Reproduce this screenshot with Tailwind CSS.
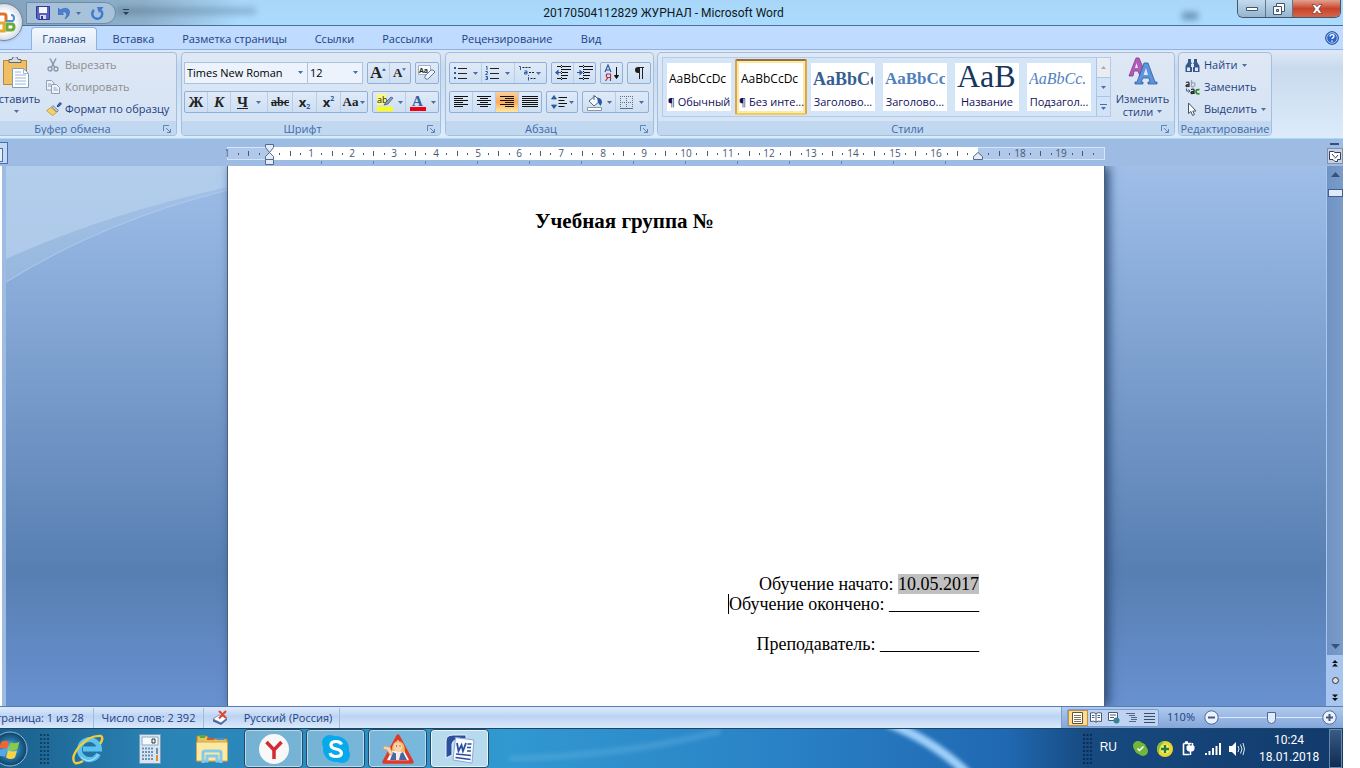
<!DOCTYPE html>
<html lang="ru">
<head>
<meta charset="utf-8">
<title>20170504112829 ЖУРНАЛ - Microsoft Word</title>
<script src="https://cdn.jsdelivr.net/npm/@tailwindcss/browser@4"></script>
</head>
<body class="h-screen overflow-hidden bg-white pr-[17px] text-[11px] text-[#1e3f7f]" style="font-family:'Open Sans','Noto Sans',sans-serif">
<svg class="hidden" aria-hidden="true">
  <symbol id="dd" viewBox="0 0 5 3"><path d="M0 0h5L2.500 3z" fill="#4a6ea5"/></symbol>
  <symbol id="launch" viewBox="0 0 8 8"><path d="M.5 6V.5H6" fill="none" stroke="#5f84b8"/><path d="M3 3l4 4M7.500 4v3.500H4" fill="none" stroke="#5f84b8"/></symbol>
</svg>
<div class="relative flex h-full flex-col overflow-hidden">

  <!-- Office button -->
  <button aria-label="Office" class="absolute -left-[15px] top-[3px] z-10 size-[38px] rounded-full border border-[#73879f] bg-radial from-white from-40% to-[#aebdd0] shadow">
    <svg class="ml-[7px] size-6" viewBox="0 0 24 24" fill="none" stroke-width="3"><path d="M13 12V6q0-2-2-2H6" stroke="#e0702a"/><path d="M13 11h6q2 0 2-3t-3-3" stroke="#4a8fd8" stroke-width="2"/><path d="M11 13H4v6q0 2 3 2h4z" stroke="#e8a72c"/><path d="M14 14h5q2 0 2 3t-3 3h-4z" stroke="#68ab3c"/></svg>
  </button>

  <!-- Title bar -->
  <header class="relative flex h-[26px] shrink-0 items-start border-b border-[#4e6f92] bg-linear-to-b from-[#a9d6f8] to-[#aadcff]">
    <div class="absolute inset-y-0 left-0 w-[240px] bg-linear-to-r from-[#86a3bc] via-[#8eb0cb] via-60% to-transparent"></div>
    <div class="absolute left-[116px] top-[7px] h-2 w-[140px] bg-linear-to-r from-[#5c7890] to-[#7ba3c4] opacity-60 blur-[3px]"></div>
    <div class="absolute left-[1182px] top-3 h-2 w-4 bg-[#44698b] opacity-60 blur-[3px]"></div>
    <div class="relative ml-[26px] mt-[2px] flex h-[22px] w-[90px] items-center gap-[6px] rounded-r-full border border-[#6c8cab] bg-[#b4cce2]/70 pl-[9px]">
      <button aria-label="Сохранить"><svg class="size-[14px]" viewBox="0 0 14 14"><path d="M.5.500h13v13H2l-1.500-1.500z" fill="#5b5fc0" stroke="#34379a"/><path d="M3 1h8v6H3z" fill="#f4f7ff"/><path d="M4 9h6v4H4z" fill="#d5d9ee"/><path d="M5 10h2v3H5z" fill="#34379a"/></svg></button>
      <button aria-label="Отменить" class="ml-[2px] flex items-center gap-[6px]"><svg class="h-[14px] w-3" viewBox="0 0 12 14"><path d="M0 2l2.200 1.800Q10 0 11.500 5.500q.5 4.500-4.500 7.500 3-4 1-6.500-1.500-1.500-4 0L5.500 8.500H0z" fill="#4a80d2" stroke="#2f5fae" stroke-width=".6"/></svg><svg class="h-[3px] w-[5px]"><use href="#dd"/></svg></button>
      <button aria-label="Повторить" class="ml-1"><svg class="size-[13px]" viewBox="0 0 13 13" fill="none"><path d="M3 3A5 5 0 1 0 10 3.500" stroke="#3c7bd0" stroke-width="2.400"/><path d="M6 0h6.500L8 6z" fill="#3c7bd0"/></svg></button>
    </div>
    <button aria-label="Настройка панели" class="relative ml-[7px] mt-[9px]"><svg class="h-[7px] w-[6px]" viewBox="0 0 6 7"><path d="M0 .5h6" stroke="#24405f"/><path d="M0 3h6L3 6z" fill="#24405f"/></svg></button>
    <h1 class="absolute inset-x-0 top-[5px] pr-4 text-center text-[12px] leading-[17px] text-[#101820]" style="font-family:Roboto,'Open Sans',sans-serif">20170504112829 ЖУРНАЛ - Microsoft Word</h1>
    <div class="relative ml-auto mr-[2px] flex h-[18px] overflow-hidden rounded-b-md border border-t-0 border-[#42566c]">
      <button aria-label="Свернуть" class="flex w-[28px] items-center justify-center border-r border-[#5f7690] bg-linear-to-b from-[#c3dbee] to-[#94b4cf]"><svg class="h-1 w-3" viewBox="0 0 12 4"><path d="M.5.500h11v3H.5z" fill="#fff" stroke="#45566b"/></svg></button>
      <button aria-label="Развернуть" class="flex w-[27px] items-center justify-center border-r border-[#5f7690] bg-linear-to-b from-[#c3dbee] to-[#94b4cf]"><svg class="size-3" viewBox="0 0 12 12" fill="#fff" stroke="#45566b"><path d="M3.500.500h8v8h-8z"/><path d="M.5 3.500h8v8h-8z"/><path d="M3.500 6.500h2v2h-2z" fill="#9ab5cc"/></svg></button>
      <button aria-label="Закрыть" class="flex w-[47px] items-center justify-center bg-linear-to-b from-[#e0a090] from-0% via-[#c8432a] via-50% to-[#d4664a]"><svg class="h-[10px] w-3" viewBox="0 0 12 10"><path d="M1 .5h3l2 2.200 2-2.200h3L7.800 5 11 9.500H8L6 7.200 4 9.500H1L4.200 5z" fill="#fff" stroke="#6e3a34" stroke-width=".7"/></svg></button>
    </div>
  </header>

  <!-- Ribbon tabs -->
  <nav class="flex h-6 shrink-0 items-end border-b border-[#8db2e3] bg-[#bfdbff] pl-[31px] text-[11px]">
    <a href="#" class="-mb-px flex h-[23px] w-[66px] items-center justify-center rounded-t border border-b-0 border-[#8db2e3] bg-linear-to-b from-[#f3f8fe] to-[#dbe7f6]">Главная</a>
    <a href="#" class="flex h-5 w-[73px] items-center justify-center">Вставка</a>
    <a href="#" class="flex h-5 w-[129px] items-center justify-center">Разметка страницы</a>
    <a href="#" class="flex h-5 w-[71px] items-center justify-center">Ссылки</a>
    <a href="#" class="flex h-5 w-[75px] items-center justify-center">Рассылки</a>
    <a href="#" class="flex h-5 w-[124px] items-center justify-center">Рецензирование</a>
    <a href="#" class="flex h-5 w-[44px] items-center justify-center">Вид</a>
    <button aria-label="Справка" class="mb-1 ml-auto mr-1"><svg class="size-[14px]" viewBox="0 0 14 14"><circle cx="7" cy="7" r="6.300" fill="#2c66c9" stroke="#1c458f"/><circle cx="7" cy="7" r="5.300" fill="none" stroke="#cfe2fa" stroke-width=".8"/><path d="M5 5.600q0-2 2-2t2 1.700q0 1-1.200 1.600-.8.400-.8 1.200M7 9.500v1.300" fill="none" stroke="#fff" stroke-width="1.400"/></svg></button>
  </nav>

  <main class="contents">
  <!-- Ribbon -->
  <section aria-label="Лента" class="flex h-[89px] shrink-0 gap-1 border-b border-[#a5dcf5] bg-linear-to-b from-[#dfe9f5] from-0% via-[#c9daee] via-20% to-[#dcecfb] pb-[2px] pt-[2px]">

    <div class="flex w-[177px] flex-col overflow-hidden rounded-r border border-l-0 border-[#a3bfe0] bg-linear-to-b from-[#dfe8f4] to-[#d3e2f4]">
      <div class="flex h-[68px] shrink-0">
        <button class="-ml-[10px] mt-1 flex w-[52px] shrink-0 flex-col items-center">
          <svg class="h-8 w-7" viewBox="0 0 28 32"><path d="M1.500 3.500h23v24h-23z" fill="#efbf62" stroke="#b98532"/><path d="M7 5.500v-3h3a3 3 0 0 1 6 0h3v3z" fill="#d6dbe2" stroke="#5f6873"/><path d="M10.500 11.500h11l5 5v14h-16z" fill="#fff" stroke="#7f9cc4"/><path d="M21.500 11.500v5h5M13 15h6M13 18h11M13 21h11M13 24h11M13 27h11" fill="none" stroke="#9db6d6"/></svg>
          <span class="mt-[3px] leading-[14px]">Вставить</span>
          <svg class="mt-1 h-[3px] w-[5px]"><use href="#dd"/></svg>
        </button>
        <div class="ml-1 mt-[1px] flex flex-col text-[11px]">
          <button class="flex h-[22px] items-center gap-[5px] text-[#8d8d8d]"><svg class="size-[14px]" viewBox="0 0 14 14" fill="none" stroke="#8597ad"><path d="M4 .5l4.500 8.500M10 .5L5.500 9" stroke-width="1.500"/><circle cx="4" cy="11" r="2" stroke-width="1.300"/><circle cx="10" cy="11" r="2" stroke-width="1.300"/></svg>Вырезать</button>
          <button class="flex h-[22px] items-center gap-[5px] text-[#8d8d8d]"><svg class="size-[14px]" viewBox="0 0 14 14" fill="#eef2f7" stroke="#8ea0b8"><path d="M.5.500h5l2.500 2.500v7H.5z"/><path d="M5.500 4.500h5l3 3v6h-8zM2 4h3M2 6h3M7.500 8h3M7.500 10h4.500"/></svg>Копировать</button>
          <button class="flex h-[22px] items-center gap-[3px]"><svg class="h-[14px] w-4" viewBox="0 0 16 14"><path d="M11 4l3-3.500 1.500 1.500L12 5z" fill="#3d69b5" stroke="#28488a"/><path d="M7 3.500l5.500 5-1.500 1.500L5.500 5z" fill="#c6cbd3" stroke="#626a75" stroke-width=".7"/><path d="M5 5.500l5.500 5-4 3-6-5z" fill="#f3d36c" stroke="#b48a26" stroke-width=".7"/></svg>Формат по образцу</button>
        </div>
      </div>
      <div class="flex flex-1 items-center bg-[#c1d8f0] text-[#3e6aaa]"><span class="flex-1 pr-[18px] text-center">Буфер обмена</span><button aria-label="Буфер обмена: параметры" class="mr-[5px]"><svg class="size-2"><use href="#launch"/></svg></button></div>
    </div>

    <div class="flex w-[260px] flex-col overflow-hidden rounded border border-[#a3bfe0] bg-linear-to-b from-[#dfe8f4] to-[#d3e2f4]">
      <div class="flex h-[68px] shrink-0 flex-col gap-[7px] pl-[2px] pt-[9px]">
        <div class="flex h-[22px] gap-1">
          <div class="flex text-black">
            <label class="relative flex"><select aria-label="Шрифт" class="w-[124px] appearance-none border border-[#abc1de] bg-[#ecf3fc] pl-[2px] text-[11px]"><option>Times New Roman</option></select><svg class="absolute right-[5px] top-[9px] h-[3px] w-[5px]"><use href="#dd"/></svg></label>
            <label class="relative -ml-px flex"><select aria-label="Размер шрифта" class="w-[56px] appearance-none border border-[#abc1de] bg-[#ecf3fc] pl-[2px] text-[11px]"><option>12</option></select><svg class="absolute right-[5px] top-[9px] h-[3px] w-[5px]"><use href="#dd"/></svg></label>
          </div>
          <div class="flex w-[44px] divide-x divide-[#b7cde8] rounded-xs border border-[#8fb0da] bg-linear-to-b from-[#e0eaf7] to-[#cddff3] font-bold text-[#222]" style="font-family:'Liberation Serif',serif">
            <button class="flex flex-1 items-center justify-center text-[17px] leading-5" aria-label="Увеличить размер">A<svg class="mb-2 h-[3px] w-1" viewBox="0 0 5 3"><path d="M0 3h5L2.500 0z" fill="#2c5aa0"/></svg></button>
            <button class="flex flex-1 items-center justify-center text-[13px] leading-5" aria-label="Уменьшить размер">A<svg class="mb-2 h-[3px] w-1"><use href="#dd"/></svg></button>
          </div>
          <button aria-label="Очистить формат" class="flex w-6 items-center justify-center rounded-xs border border-[#8fb0da] bg-linear-to-b from-[#e0eaf7] to-[#cddff3]"><svg class="h-4 w-[18px]" viewBox="0 0 18 16"><path d="M.5.500h12v9H.5z" fill="#fff" stroke="#9fb0c8"/><text x="1" y="8" font-size="7" font-weight="bold" fill="#222">Aa</text><path d="M7 11l6-6q2-1 4 2l-6 6q-1 2-3 1t-1-3z" fill="#eef3fb" stroke="#60779b"/></svg></button>
        </div>
        <div class="flex h-[22px] gap-1 text-[#222]">
          <div class="flex w-[184px] divide-x divide-[#b7cde8] rounded-xs border border-[#8fb0da] bg-linear-to-b from-[#e0eaf7] to-[#cddff3] font-bold" style="font-family:'Liberation Serif',serif">
            <button class="w-[23px] text-[15px] leading-5">Ж</button>
            <button class="w-[23px] text-[15px] italic leading-5">К</button>
            <button class="flex w-[37px] items-center justify-center gap-2 text-[15px] leading-5"><span class="underline">Ч</span><svg class="h-[3px] w-[5px]"><use href="#dd"/></svg></button>
            <button class="w-[25px] text-[12px] leading-5 line-through">abc</button>
            <button class="flex w-6 items-center justify-center text-[13px] leading-5" style="font-family:'Open Sans',sans-serif">x<span class="pt-2 text-[7px] leading-[9px] text-[#2c5aa0]">2</span></button>
            <button class="flex w-6 items-center justify-center text-[13px] leading-5" style="font-family:'Open Sans',sans-serif">x<span class="pb-2 text-[7px] leading-[9px] text-[#2c5aa0]">2</span></button>
            <button class="flex flex-1 items-center justify-center gap-[2px] text-[13px] leading-5">Aa<svg class="h-[3px] w-[5px]"><use href="#dd"/></svg></button>
          </div>
          <div class="flex w-[67px] divide-x divide-[#b7cde8] rounded-xs border border-[#8fb0da] bg-linear-to-b from-[#e0eaf7] to-[#cddff3]">
            <button aria-label="Цвет выделения" class="flex flex-1 items-center justify-center gap-1"><svg class="size-[18px]" viewBox="0 0 18 18"><path d="M1 1h9v11H1z" fill="#fbf87a"/><path d="M1 14h16v4H1z" fill="#ffff00"/><text x="1" y="10" font-size="9" fill="#222">ab</text><path d="M15 4l2 1-5 6-4 1 2-3z" fill="#8a9fbd" stroke="#475a77" stroke-width=".8"/></svg><svg class="h-[3px] w-[5px]"><use href="#dd"/></svg></button>
            <button aria-label="Цвет текста" class="flex flex-1 items-center justify-center gap-1"><svg class="size-[18px]" viewBox="0 0 18 18"><text x="3" y="13" font-size="15" font-weight="bold" font-family="Liberation Serif" fill="#34609e">A</text><path d="M1 14h16v4H1z" fill="#f00010"/></svg><svg class="h-[3px] w-[5px]"><use href="#dd"/></svg></button>
          </div>
        </div>
      </div>
      <div class="flex flex-1 items-center bg-[#c1d8f0] text-[#3e6aaa]"><span class="flex-1 pr-1 text-center">Шрифт</span><button aria-label="Шрифт: параметры" class="mr-[5px]"><svg class="size-2"><use href="#launch"/></svg></button></div>
    </div>

    <div class="flex w-[209px] flex-col overflow-hidden rounded border border-[#a3bfe0] bg-linear-to-b from-[#dfe8f4] to-[#d3e2f4]">
      <div class="flex h-[68px] shrink-0 flex-col gap-[7px] pl-[3px] pt-[9px]">
        <div class="flex h-[22px] gap-1">
          <div class="flex w-[98px] divide-x divide-[#b7cde8] rounded-xs border border-[#8fb0da] bg-linear-to-b from-[#e0eaf7] to-[#cddff3]">
            <button aria-label="Маркеры" class="flex flex-1 items-center justify-center gap-[6px]"><svg class="size-[14px]" viewBox="0 0 14 14"><path d="M1 1h2v2H1zM1 6h2v2H1zM1 11h2v2H1z" fill="#2c5aa0"/><path d="M5 2.500h9M5 7.500h9M5 12.500h9" stroke="#222"/></svg><svg class="h-[3px] w-[5px]"><use href="#dd"/></svg></button>
            <button aria-label="Нумерация" class="flex flex-1 items-center justify-center gap-[6px]"><svg class="size-[14px]" viewBox="0 0 14 14"><path d="M1 .5h1V4M.5 5.500h2V7L.5 8.500h2M.5 10.500h2v3h-2M1 12h1" stroke="#2c5aa0" fill="none"/><path d="M5 2.500h9M5 7.500h9M5 12.500h9" stroke="#222"/></svg><svg class="h-[3px] w-[5px]"><use href="#dd"/></svg></button>
            <button aria-label="Многоуровневый список" class="flex flex-1 items-center justify-center"><svg class="h-4 w-[17px]" viewBox="0 0 17 16"><path d="M0 1.500h1.500V5M5.500 6h2.500v3H5.500V7.500H8M9.500 12v3.500M9.500 10v1" stroke="#2c5aa0" fill="none"/><path d="M3.500 2.500h8M10 7.500h6M11.500 13.500h5" stroke="#222" stroke-dasharray="2 1"/></svg><svg class="h-[3px] w-[5px]"><use href="#dd"/></svg></button>
          </div>
          <div class="flex w-[45px] divide-x divide-[#b7cde8] rounded-xs border border-[#8fb0da] bg-linear-to-b from-[#e0eaf7] to-[#cddff3]">
            <button aria-label="Уменьшить отступ" class="flex flex-1 items-center justify-center"><svg class="size-4" viewBox="0 0 16 16"><path d="M2 1.500h4M7 1.500h9M2 13.500h4M7 10.500h6M7 4.500h9M7 7.500h6M7 13.500h5" stroke="#111"/><path d="M0 7.500l3.500-3V7H6v1H3.500v2.500z" fill="#2c5aa0"/><path d="M6.500 0v16" stroke="#111" stroke-dasharray="1 1"/></svg></button>
            <button aria-label="Увеличить отступ" class="flex flex-1 items-center justify-center"><svg class="size-4" viewBox="0 0 16 16"><path d="M2 1.500h4M7 1.500h9M2 13.500h4M7 10.500h6M7 4.500h9M7 7.500h6M7 13.500h5" stroke="#111"/><path d="M6 7.500l-3.500-3V7H0v1h2.500v2.500z" fill="#2c5aa0"/><path d="M6.500 0v16" stroke="#111" stroke-dasharray="1 1"/></svg></button>
          </div>
          <button aria-label="Сортировка" class="flex w-[23px] items-center justify-center rounded-xs border border-[#8fb0da] bg-linear-to-b from-[#e0eaf7] to-[#cddff3]"><svg class="h-[18px] w-4" viewBox="0 0 16 18"><path d="M1 8l3-7 3 7M2 6h4" stroke="#2c5aa0" fill="none" stroke-width="1.200"/><path d="M6.500 17v-7H3q-1.500 1.500 0 3.500h3.500M4 13.500L1.500 17" stroke="#b03344" fill="none" stroke-width="1.200"/><path d="M12.500 3v10M10.500 11.500l2 3 2-3z" stroke="#111" fill="#111"/></svg></button>
          <button aria-label="Знаки абзаца" class="flex w-6 items-center justify-center rounded-xs border border-[#8fb0da] bg-linear-to-b from-[#e0eaf7] to-[#cddff3]"><svg class="h-3 w-[10px]" viewBox="0 0 10 12"><path d="M10 .5H4M5.500 1v11M8.500 1v11" fill="none" stroke="#222"/><path d="M6 0H4a3 3 0 0 0 0 6h2z" fill="#222"/></svg></button>
        </div>
        <div class="flex h-[22px] gap-1">
          <div class="flex w-[93px] divide-x divide-[#b7cde8] rounded-xs border border-[#8fb0da] bg-linear-to-b from-[#e0eaf7] to-[#cddff3]">
            <button aria-label="По левому краю" class="flex flex-1 items-center justify-center"><svg class="h-3 w-[14px]" viewBox="0 0 14 12"><path d="M0 .5h14M0 2.500h9M0 4.500h14M0 6.500h9M0 8.500h14M0 10.500h9" stroke="#111"/></svg></button>
            <button aria-label="По центру" class="flex flex-1 items-center justify-center"><svg class="h-3 w-[14px]" viewBox="0 0 14 12"><path d="M0 .5h14M3 2.500h8M0 4.500h14M3 6.500h8M0 8.500h14M3 10.500h8" stroke="#111"/></svg></button>
            <button aria-label="По правому краю" aria-pressed="true" class="flex flex-1 items-center justify-center bg-linear-to-b from-[#f8cfa0] via-[#fbab55] to-[#fde7a0]"><svg class="h-3 w-[14px]" viewBox="0 0 14 12"><path d="M0 .5h14M5 2.500h9M0 4.500h14M5 6.500h9M0 8.500h14M5 10.500h9" stroke="#111"/></svg></button>
            <button aria-label="По ширине" class="flex flex-1 items-center justify-center"><svg class="h-3 w-4" viewBox="0 0 16 12"><path d="M0 .5h16M0 2.500h16M0 4.500h16M0 6.500h16M0 8.500h16M0 10.500h16" stroke="#111"/></svg></button>
          </div>
          <button aria-label="Интервал" class="flex w-8 items-center justify-center gap-[2px] rounded-xs border border-[#8fb0da] bg-linear-to-b from-[#e0eaf7] to-[#cddff3]"><svg class="size-4" viewBox="0 0 16 16"><path d="M3 2v3M3 11v3" stroke="#2c5aa0"/><path d="M.5 5L3 1.500 5.500 5zM.5 11L3 14.500 5.500 11z" fill="#2c5aa0" stroke="#2c5aa0" stroke-width=".8"/><path d="M7.500 3.500H16M7.500 6.500h6M7.500 9.500H16M7.500 12.500h6" stroke="#111"/></svg><svg class="h-[3px] w-[5px]"><use href="#dd"/></svg></button>
          <div class="flex w-[67px] divide-x divide-[#b7cde8] rounded-xs border border-[#8fb0da] bg-linear-to-b from-[#e0eaf7] to-[#cddff3]">
            <button aria-label="Заливка" class="flex flex-1 items-center justify-center gap-1"><svg class="size-[17px]" viewBox="0 0 17 17"><path d="M3 7l6-5 5 5-6 5z" fill="#f7fafe" stroke="#50688c"/><path d="M8 6V1" stroke="#50688c"/><path d="M11 3.500q5 .5 5 5L14.500 12 12 8.500z" fill="#2c5aa0"/><path d="M1.500 13.500h14v3h-14z" fill="#fff" stroke="#8a96a8"/></svg><svg class="h-[3px] w-[5px]"><use href="#dd"/></svg></button>
            <button aria-label="Границы" class="flex flex-1 items-center justify-center gap-[6px]"><svg class="size-[13px]" viewBox="0 0 13 13"><path d="M.5 0v13M6.500 0v13M12.500 0v13M0 .5h13M0 6.500h13" stroke="#5d6e88" stroke-dasharray="1 1"/><path d="M0 12.500h13" stroke="#5d6e88"/></svg><svg class="h-[3px] w-[5px]"><use href="#dd"/></svg></button>
          </div>
        </div>
      </div>
      <div class="flex flex-1 items-center bg-[#c1d8f0] text-[#3e6aaa]"><span class="flex-1 pr-1 text-center">Абзац</span><button aria-label="Абзац: параметры" class="mr-[5px]"><svg class="size-2"><use href="#launch"/></svg></button></div>
    </div>

    <div class="-ml-px flex w-[518px] flex-col overflow-hidden rounded border border-[#a3bfe0] bg-linear-to-b from-[#dfe8f4] to-[#d3e2f4]">
      <div class="flex h-[68px] shrink-0 pl-1 pt-1">
        <div class="flex h-[60px] w-[449px] border border-[#b3cbe8] bg-[#d5e5f8] pt-px text-[#10105c]">
          <button class="flex h-14 w-[72px] flex-col justify-center px-1"><span class="flex h-12 w-16 flex-col bg-white"><span class="mx-[2px] flex h-8 items-center overflow-hidden text-[12px] whitespace-nowrap text-black">AaBbCcDc</span><span class="text-center leading-[14px] whitespace-nowrap">¶ Обычный</span></span></button>
          <button aria-pressed="true" class="flex h-14 w-[72px] flex-col justify-center rounded-xs border-2 border-t-[#94713c] border-r-[#d9a64b] border-b-[#eccf5b] border-l-[#d9a64b] bg-[#fbe9a4] px-[2px]"><span class="flex h-12 w-16 flex-col bg-white"><span class="mx-[2px] flex h-8 items-center overflow-hidden text-[12px] whitespace-nowrap text-black">AaBbCcDc</span><span class="text-center leading-[14px] whitespace-nowrap">¶ Без инте...</span></span></button>
          <button class="flex h-14 w-[72px] flex-col justify-center px-1"><span class="flex h-12 w-16 flex-col bg-white"><span class="mx-[2px] flex h-8 items-center overflow-hidden text-[18px] font-bold whitespace-nowrap text-[#365f91]" style="font-family:'Liberation Serif',serif">AaBbCc</span><span class="text-center leading-[14px] whitespace-nowrap">Заголово...</span></span></button>
          <button class="flex h-14 w-[72px] flex-col justify-center px-1"><span class="flex h-12 w-16 flex-col bg-white"><span class="mx-[2px] flex h-8 items-center overflow-hidden text-[17px] font-bold whitespace-nowrap text-[#4f81bd]" style="font-family:'Liberation Serif',serif">AaBbCc</span><span class="text-center leading-[14px] whitespace-nowrap">Заголово...</span></span></button>
          <button class="flex h-14 w-[72px] flex-col justify-center px-1"><span class="flex h-12 w-16 flex-col bg-white"><span class="mx-[2px] flex h-8 items-start overflow-hidden text-[32px] leading-[26px] whitespace-nowrap text-[#17365d]" style="font-family:'Liberation Serif',serif">AaB</span><span class="text-center leading-[14px] whitespace-nowrap">Название</span></span></button>
          <button class="flex h-14 w-[72px] flex-col justify-center px-1"><span class="flex h-12 w-16 flex-col bg-white"><span class="mx-[2px] flex h-8 items-center overflow-hidden text-[16px] whitespace-nowrap text-[#4f81bd] italic" style="font-family:'Liberation Serif',serif">AaBbCc.</span><span class="text-center leading-[14px] whitespace-nowrap">Подзагол...</span></span></button>
          <div class="-mt-px ml-auto flex w-[14px] flex-col divide-y divide-[#a9c4e5] border-l border-[#a9c4e5]">
            <button aria-label="Вверх" class="flex flex-1 items-center justify-center bg-[#e9ecf1]"><svg class="h-[3px] w-[5px]" viewBox="0 0 5 3"><path d="M0 3h5L2.500 0z" fill="#a4a9b2"/></svg></button>
            <button aria-label="Вниз" class="flex flex-1 items-center justify-center bg-[#d3e3f7]"><svg class="h-[3px] w-[5px]"><use href="#dd"/></svg></button>
            <button aria-label="Все стили" class="flex flex-1 flex-col items-center justify-center gap-[2px] bg-[#d3e3f7]"><span class="h-px w-[7px] bg-[#4a6ea5]"></span><svg class="h-[3px] w-[5px]"><use href="#dd"/></svg></button>
          </div>
        </div>
        <button class="flex flex-1 flex-col items-center"><svg class="h-7 w-[30px]" viewBox="0 0 30 28"><path d="M1 19L8 1h3l5 12-2 6h-2l-2-5H6l-1 5z" fill="#b35bb8" stroke="#7d3888" stroke-width=".8"/><path d="M7 11h3L8.500 6z" fill="#dfe8f4"/><path d="M7 27v-2h2l7-19h4l7 19h2v2h-9v-2h2l-1-4h-6l-2 4h2v2z" fill="#5b93dc" stroke="#2d5da3" stroke-width=".8"/><path d="M15.500 18h4.500l-2-7z" fill="#dfe8f4"/></svg><span class="mt-[7px] leading-[13px]">Изменить</span><span class="flex items-center gap-1 leading-[13px]">стили<svg class="h-[3px] w-[5px]"><use href="#dd"/></svg></span></button>
      </div>
      <div class="flex flex-1 items-center bg-[#c1d8f0] text-[#3e6aaa]"><span class="flex-1 pr-1 text-center">Стили</span><button aria-label="Стили: параметры" class="mr-[5px]"><svg class="size-2"><use href="#launch"/></svg></button></div>
    </div>

    <div class="-ml-px flex w-[94px] flex-col overflow-hidden rounded border border-[#a3bfe0] bg-linear-to-b from-[#dfe8f4] to-[#d3e2f4]">
      <div class="flex h-[68px] shrink-0 flex-col pl-[6px] pt-[1px]">
        <button class="flex h-[22px] items-center gap-1"><svg class="size-[15px]" viewBox="0 0 15 15"><path d="M3 1h3v3l1 2v8H.5V8L3 4zM9 1h3v3l2.500 4v6H8V6l1-2z" fill="#37588f"/><path d="M6 6h3v3H6zM2 9.500h3V13H2zM10 9.500h3V13h-3z" fill="#dce8f8"/></svg>Найти<svg class="ml-px h-[3px] w-[5px]"><use href="#dd"/></svg></button>
        <button class="flex h-[22px] items-center gap-1"><svg class="size-[15px]" viewBox="0 0 15 15"><g fill="none" stroke-width="1.300"><path d="M1 2.500q3-1 3 .5V7M4 4.500q-3 0-3 1.300T4 6" stroke="#333"/><path d="M6.500 0v7M6.500 3q3.500-1 3.500 1.500T6.500 7" stroke="#9aa6b8"/><path d="M6 9.500q3-1 3 .5v4M9 11.500q-3 0-3 1.300t3 .2" stroke="#222"/><path d="M14.500 9.700q-3.500-.7-3.500 2t3.500 2" stroke="#2b8b35" stroke-width="1.800"/><path d="M1.500 8.500V11H5M3.500 9.500L5 11l-1.500 1.500" stroke="#3f608f" stroke-width="1"/></g></svg>Заменить</button>
        <button class="flex h-[22px] items-center gap-1"><svg class="h-[14px] w-[15px]" viewBox="0 0 15 14"><path d="M3.500 1v10.500l2.500-2 1.500 4 2-1-1.700-3.500h3.200z" fill="#fff" stroke="#44546d"/></svg>Выделить<svg class="h-[3px] w-[5px]"><use href="#dd"/></svg></button>
      </div>
      <div class="flex flex-1 items-center justify-center bg-[#c1d8f0] text-[#3e6aaa]">Редактирование</div>
    </div>
  </section>

  <!-- Ruler -->
  <div class="flex h-[27px] shrink-0 bg-[#9dbbe3]">
    <div class="flex w-[6px] shrink-0 items-start pt-[3px]"><button aria-label="Табуляция" class="h-[22px] w-2 shrink-0 border border-l-0 border-[#4a71ad] bg-[#c3d9f6] pt-[3px]"><span class="block h-[14px] w-[3px] border border-l-0 border-[#4a71ad] bg-[#e6f0fc]"></span></button></div>
    <div class="flex flex-1 justify-center"><svg id="ruler" class="h-[27px] w-[880px]" viewBox="0 0 880 27" role="img" aria-label="Линейка"></svg></div>
    <div class="flex w-[17px] shrink-0 flex-col items-center pt-1"><span class="mb-[3px] h-[2px] w-[9px] bg-[#33507f]"></span><button aria-label="Показать линейку" class="flex size-4 items-center justify-center border border-[#8290a8] bg-[#c5d2e6]"><svg class="size-3" viewBox="0 0 12 12" fill="#fff" stroke="#33415c"><path d="M.5 1.500h4l1.500 1h5.500v7H8.500v2H6L4 9.500H.5z"/><path d="M3 4l3 3.500M9 5L6 8.500" fill="none"/></svg></button></div>
  </div>

  <!-- Document area -->
  <section aria-label="Документ" class="flex min-h-0 flex-1">
    <div class="w-[6px] shrink-0 border-l-2 border-white bg-[#9dbbe3]"></div>
    <div class="relative flex min-w-0 flex-1 justify-center overflow-hidden bg-linear-to-b from-[#9fbfe9] from-0% via-[#587fb2] via-75% to-[#6891d0]">
      <svg class="absolute left-0 top-0 h-[120px] w-[222px]" viewBox="0 0 222 120"><path d="M0 0h222v24Q100 54 0 116z" fill="#b3cbe6" fill-opacity=".35"/><path d="M0 0h222v21Q100 48 0 93z" fill="#bcd4f0" fill-opacity=".6"/><path d="M222 24Q100 54 0 116" fill="none" stroke="#aecbee"/></svg>
      <article class="relative flex w-[878px] flex-col border-x border-[#4d6079] bg-white pl-[42px] pr-[125px] text-black shadow-[4px_0_10px_#2b4a75]" style="font-family:'Liberation Serif','Times New Roman',serif">
        <h2 class="mt-[43px] text-center text-[21px] leading-6 font-bold">Учебная группа №</h2>
        <div class="mt-[341px] text-right text-[18px] leading-5">
          <p>Обучение начато: <span class="bg-[#c0c0c0]">10.05.2017</span></p>
          <p><span class="border-l border-black">Обучение</span> окончено: __________</p>
          <p>&nbsp;</p>
          <p>Преподаватель: ___________</p>
        </div>
      </article>
    </div>
    <div class="flex w-[17px] shrink-0 flex-col items-center border-l border-[#a9c6ef] bg-linear-to-r from-[#6e93c4] to-[#7c9cc9]">
      <button aria-label="Прокрутить вверх" class="pt-[6px]"><svg class="block h-[5px] w-[9px]" viewBox="0 0 9 5"><path d="M0 5h9L4.500 0z" fill="#39527d"/></svg></button>
      <div class="mt-3 h-2 w-[15px] border border-[#3f5f93] bg-[#dfeafa]"></div>
      <button aria-label="Прокрутить вниз" class="mt-auto pb-[6px]"><svg class="block h-[5px] w-[9px]" viewBox="0 0 9 5"><path d="M0 0h9L4.500 5z" fill="#39527d"/></svg></button>
      <div class="flex h-[51px] w-4 flex-col items-center justify-between bg-[#a8c5f0] py-[5px]">
        <button aria-label="Предыдущая"><svg class="block h-[7px] w-[6px]" viewBox="0 0 6 7"><path d="M0 3h6L3 0zM0 6.500h6L3 3.500z" fill="#111"/></svg></button>
        <button aria-label="Объект перехода" class="size-[7px] rounded-full border border-[#333] bg-[#d8dde5]"></button>
        <button aria-label="Следующая"><svg class="block h-[7px] w-[6px]" viewBox="0 0 6 7"><path d="M0 .5h6L3 3.500zM0 4h6L3 7z" fill="#111"/></svg></button>
      </div>
    </div>
  </section>
  </main>

  <!-- Status bar -->
  <footer class="flex h-[22px] shrink-0 border-t border-[#567db0] bg-linear-to-b from-[#d8e7fb] from-10% via-[#bcd3f3] via-45% to-[#dbe9fb]">
    <div class="flex items-center text-[11px] whitespace-nowrap">
      <button class="-ml-4 w-[110px] border-r border-[#9fbbe0] pr-1 text-center leading-5">Страница: 1 из 28</button>
      <button class="w-[110px] border-r border-[#9fbbe0] text-center leading-5">Число слов: 2 392</button>
      <button aria-label="Проверка правописания" class="ml-2"><svg class="block size-4" viewBox="0 0 16 16"><path d="M1 9l6-4 8 3-6 5z" fill="#fff" stroke="#8093b8"/><path d="M1 9v2.500L9 15l6-5V8l-6 5z" fill="#4a68a8"/><path d="M7 1l7 7M14 1L7 8.500" stroke="#e0492f" stroke-width="2"/></svg></button>
      <button class="ml-2 w-[104px] border-r border-[#9fbbe0] pl-px text-center leading-5">Русский (Россия)</button>
    </div>
    <div class="ml-auto flex items-center border-l border-[#7d9ccb] bg-linear-to-b from-[#b0caee] to-[#83a6da] pl-[5px]">
      <div class="flex h-[18px] w-[92px] rounded-xs border border-[#7c9dcd] bg-[#bdd3f1]">
        <button aria-label="Разметка страницы" aria-pressed="true" class="flex flex-1 items-center justify-center border border-[#bc9145] bg-[#fbdc92]"><svg class="h-3 w-[11px]" viewBox="0 0 11 12"><path d="M.5.500h10v11H.5z" fill="#fff" stroke="#5e5234"/><path d="M2 3.500h7M2 5.500h7M2 7.500h7M2 9.500h7" stroke="#5e5234" stroke-width=".8"/></svg></button>
        <button aria-label="Режим чтения" class="flex flex-1 items-center justify-center"><svg class="h-[11px] w-3" viewBox="0 0 12 11"><path d="M.5 1q3-1 5.500.500 2.500-1.500 5.500-.5v8.500q-3-1-5.500.500Q3.500 8.500.5 9.500zM6 1.500V10" fill="#fff" stroke="#495a76"/><path d="M2 3.500h2.500M2 5.500h2.500M7.500 3.500H10M7.500 5.500H10" stroke="#495a76"/></svg></button>
        <button aria-label="Веб-документ" class="flex flex-1 items-center justify-center"><svg class="size-3" viewBox="0 0 12 12"><path d="M.5.500h9v8h-9z" fill="#fff" stroke="#495a76"/><path d="M2 3h6M2 5.500h4" stroke="#495a76"/><circle cx="8.500" cy="8.500" r="3" fill="#34839a"/></svg></button>
        <button aria-label="Структура" class="flex flex-1 items-center justify-center"><svg class="h-[10px] w-[11px]" viewBox="0 0 11 10"><path d="M0 .5h9M3 2.500h6M5 4.500h6M5 6.500h6M3 8.500h7" stroke="#566786"/></svg></button>
        <button aria-label="Черновик" class="flex flex-1 items-center justify-center"><svg class="h-[10px] w-[11px]" viewBox="0 0 11 10"><path d="M0 .5h11M0 3.500h11M0 6.500h11M0 9.500h11" stroke="#3d4d69"/></svg></button>
      </div>
      <button class="ml-2 w-7 text-[11px]">110%</button>
      <button aria-label="Уменьшить масштаб" class="ml-[9px]"><svg class="block size-[15px]" viewBox="0 0 15 15"><circle cx="7.500" cy="7.500" r="6.700" fill="#eaf2fd" stroke="#4f6893"/><path d="M4 7.500h7" stroke="#44597d" stroke-width="2"/></svg></button>
      <input type="range" aria-label="Масштаб" min="0" max="100" value="51" class="h-3 w-[103px] appearance-none bg-[linear-gradient(#dfeafa,#dfeafa)] bg-[length:100%_1px] bg-center bg-no-repeat [&::-webkit-slider-thumb]:h-3 [&::-webkit-slider-thumb]:w-[9px] [&::-webkit-slider-thumb]:appearance-none [&::-webkit-slider-thumb]:rounded-b-full [&::-webkit-slider-thumb]:border [&::-webkit-slider-thumb]:border-[#4f6893] [&::-webkit-slider-thumb]:bg-[#dfeafa]">
      <button aria-label="Увеличить масштаб" class="mr-[6px]"><svg class="block size-[15px]" viewBox="0 0 15 15"><circle cx="7.500" cy="7.500" r="6.700" fill="#eaf2fd" stroke="#4f6893"/><path d="M4 7.500h7M7.500 4v7" stroke="#44597d" stroke-width="2"/></svg></button>
    </div>
  </footer>

  <!-- Taskbar -->
  <footer class="relative flex h-10 shrink-0 items-stretch border-t border-[#1c4668] bg-[linear-gradient(to_right,#1a5f8c_0%,#2a83b5_12%,#3198d0_38%,#2a82c6_58%,#2068b2_75%,#174a80_81%,#123a6b_100%)]">
    <svg class="absolute left-[480px] top-0 h-full w-[600px]" viewBox="0 0 600 39" preserveAspectRatio="none" aria-hidden="true"><defs><filter id="soft"><feGaussianBlur stdDeviation="2"/></filter></defs><path d="M30 30Q150 26 240 2" stroke="#6cb8e6" stroke-opacity=".35" stroke-width="6" fill="none" filter="url(#soft)"/><path d="M408 -6Q454 12 488 45" stroke="#9fd0fa" stroke-width="9" fill="none" filter="url(#soft)"/></svg>
    <button aria-label="Пуск" class="relative -ml-2 flex w-9 items-center justify-center"><svg class="size-9" viewBox="0 0 36 36"><defs><radialGradient id="orb"><stop offset="0" stop-color="#63d4f0"/><stop offset=".6" stop-color="#226f9f"/><stop offset="1" stop-color="#123f63"/></radialGradient></defs><circle cx="18" cy="18" r="17" fill="url(#orb)" stroke="#8ac0dc"/><path d="M9 11q4-3 8 0l-2 7q-4-2-8 0z" fill="#ee6434"/><path d="M18.500 11.500q5 2 9-1l-2 7.500q-4 3-9 .5z" fill="#8cc94b"/><path d="M7 19q4-2 8 0l-2 7q-4-2-8 0z" fill="#55a7e8"/><path d="M16 19.500q5 2 9 0l-2 7q-4 3-9 0z" fill="#fbd347"/></svg></button>
    <svg class="relative ml-[12px] mt-1 h-8 w-[10px]" viewBox="0 0 10 32" aria-hidden="true"><path d="M1 1v31M4.500 1v31M8 1v31" stroke="#123f5e" stroke-width="2" stroke-dasharray="2 2"/></svg>
    <button aria-label="Internet Explorer" class="relative ml-[22px] flex w-8 items-center justify-center"><svg class="size-8" viewBox="0 0 32 32" fill="none"><path d="M26.500 21a10 10 0 1 1 1-5H11" stroke="#5cc3f1" stroke-width="5"/><path d="M26 21a10 10 0 0 1-17 3" stroke="#b9e8fb" stroke-width="1"/><path d="M3 30Q-2 24 8 13T29 3q3 2-1 8M3 30q3 1 8-2" stroke="#f2cb3a" stroke-width="2.400"/></svg></button>
    <button aria-label="Калькулятор" class="relative ml-7 flex w-9 items-center justify-center"><svg class="h-[30px] w-[22px]" viewBox="0 0 22 30"><path d="M.5.500h21v29H.5z" fill="#d7e6f1" stroke="#7c9cb8"/><path d="M3 3h16v8H3z" fill="#f5fafd" stroke="#8ba9c5"/><path d="M13 5h3v4h-3z" fill="none" stroke="#333"/><path d="M3 14.500h12M3 18h12M3 21.500h12M3 25h12" stroke="#6f90b3" stroke-width="2" stroke-dasharray="2 1"/><path d="M17 14h2v6h-2z" fill="#6f90b3"/><path d="M17 21h2v6h-2z" fill="#e68b34"/></svg></button>
    <button aria-label="Проводник" class="relative ml-[26px] flex w-9 items-center justify-center"><svg class="h-[30px] w-[34px]" viewBox="0 0 34 30"><path d="M2 2h10l2 3h18v22H2z" fill="#e8c05a" stroke="#b38b2d"/><path d="M5 1h5v3H5z" fill="#55ab43"/><path d="M12 4h7v2h-7z" fill="#d25732"/><path d="M22 4h7v2h-7z" fill="#4e8fd0"/><path d="M1.500 8h31v19h-31z" fill="#fbe9a4" stroke="#d0a848"/><path d="M8 29V19q0-2 2-2h14q2 0 2 2v10M8 27h4v-5h10v5h4" fill="none" stroke="#87c9e8" stroke-width="3"/></svg></button>
    <div class="relative ml-[14px] flex gap-[3px]">
      <button aria-label="Яндекс" class="flex w-[59px] items-center justify-center rounded-sm border border-[#1f4b68] bg-white/35 inset-ring inset-ring-white/50"><svg class="size-[30px]" viewBox="0 0 30 30"><circle cx="15" cy="15" r="15" fill="#f8f8f9"/><path d="M7.500 8l7.500 8 7.500-8M15 15v10" fill="none" stroke="#d32a33" stroke-width="3.500"/></svg></button>
      <button aria-label="Skype" class="flex w-[59px] items-center justify-center rounded-sm border border-[#1f4b68] bg-white/35 inset-ring inset-ring-white/50"><svg class="size-[30px]" viewBox="0 0 30 30" fill="#08a9ea"><circle cx="9" cy="9" r="8"/><circle cx="21" cy="21" r="8"/><circle cx="15" cy="15" r="13"/><path d="M20.500 10.500q-1-3-5.500-3-5 0-5 3.500 0 3 5 4t5.500 4q0 3.500-5.500 3.500-5 0-6-3.500" fill="none" stroke="#fff" stroke-width="3.200"/></svg></button>
      <button aria-label="Приложение" class="flex w-[59px] items-center justify-center rounded-sm border border-[#1f4b68] bg-white/35 inset-ring inset-ring-white/50"><svg class="h-8 w-[34px]" viewBox="0 0 34 32"><path d="M17 3L3 29h28z" fill="#fff" stroke="#dd3a2b" stroke-width="3.500" stroke-linejoin="round"/><path d="M11 18q0-10 6-10 7 0 7 11z" fill="#f0bb55"/><circle cx="17" cy="14" r="4.500" fill="#f8d2ae"/><path d="M15 13h1M18.500 13h1" stroke="#4a3524"/><path d="M9 27l3-8q5 3 10 0l4 8z" fill="#4867a5"/><path d="M15 19h5l-2 8h-3z" fill="#f2ede6"/><path d="M3 13l6 1 3 7-3 1-3-5-4-1z" fill="#f8d2ae" stroke="#c98e6c" stroke-width=".6"/></svg></button>
      <button aria-label="Microsoft Word" class="flex w-[59px] items-center justify-center rounded-sm border border-[#1f4b68] bg-white/65 inset-ring inset-ring-white/70"><svg class="size-[30px]" viewBox="0 0 30 30"><path d="M1 24V7q0-6 7-6h13v5H11q-3 0-4 4v11z" fill="#2b4f9e" stroke="#eaf2fb"/><path d="M10.500 3.500L29 6l-2 23-19-3z" fill="#f8fbff" stroke="#8fa8cf"/><path d="M12 9l1.500 8 3-6 1.500 6 3-8" fill="none" stroke="#2b4f9e" stroke-width="1.800"/><path d="M11 20l15 1.500M10.500 23.500l15 2M22.500 10h4M22 13.500h4M22 17h4" stroke="#2b4f9e" stroke-width="1.500"/></svg></button>
    </div>
    <div class="relative ml-auto flex items-center text-[12px] text-white">
      <svg class="h-8 w-[9px]" viewBox="0 0 9 32" aria-hidden="true"><path d="M1 1v31M4.500 1v31M8 1v31" stroke="#0d2c52" stroke-width="2" stroke-dasharray="2 2"/></svg>
      <button class="mb-1 ml-2 text-[12px]" style="font-family:'Liberation Sans',sans-serif">RU</button>
      <button aria-label="Skype" class="ml-4"><svg class="block size-[15px]" viewBox="0 0 15 15" fill="#72b73a"><circle cx="5" cy="5" r="5"/><circle cx="10" cy="10" r="5"/><circle cx="7.500" cy="7.500" r="6"/><path d="M4.500 7.500l2 2 4-4" fill="none" stroke="#fff" stroke-width="1.500"/></svg></button>
      <button aria-label="Антивирус" class="ml-[9px]"><svg class="block size-4" viewBox="0 0 16 16"><circle cx="8" cy="8" r="8" fill="#e9d72c"/><path d="M8 0a8 8 0 0 0-6 13Q1 5 8 0z" fill="#7cbf3f"/><circle cx="8" cy="8" r="4.500" fill="#f7ee90"/><path d="M8 4v8M4 8h8" stroke="#23802f" stroke-width="2.400"/></svg></button>
      <button aria-label="Питание" class="ml-2"><svg class="block size-[15px]" viewBox="0 0 15 15" fill="none" stroke="#fff"><path d="M2.500 2.500h8M2.500 2.500v11h6M4 1h3" stroke-width="1.600"/><path d="M6 5h7v3q0 2-2 2H8q-2 0-2-2z" fill="#fff"/><path d="M8 2v3M11.500 2v3M9.500 10v4" stroke-width="1.500"/></svg></button>
      <button aria-label="Сеть" class="ml-[9px]"><svg class="block h-3 w-4" viewBox="0 0 16 12" fill="#fff"><path d="M0 10h2v2H0zM3.500 8h2v4h-2zM7 5h2v7H7zM10.500 3h2v9h-2zM14 0h2v12h-2z"/></svg></button>
      <button aria-label="Громкость" class="ml-2"><svg class="block h-[14px] w-4" viewBox="0 0 16 14"><path d="M0 4h3l4-4v14l-4-4H0z" fill="#fff"/><path d="M9 4q2 3 0 6M11.500 2.500q3 4.500 0 9M14 1q3 6 0 12" fill="none" stroke="#d9e7f4"/></svg></button>
      <time class="ml-[14px] mr-[10px] w-[60px] text-center leading-[17px] whitespace-nowrap" style="font-family:Roboto,'Open Sans',sans-serif">10:24<br>18.01.2018</time>
      <button aria-label="Показать рабочий стол" class="mr-px h-full w-[13px] border border-[#6a88ac] bg-linear-to-b from-[#3a5b86] to-[#0e2b52]"></button>
    </div>
  </footer>
</div>
<script>
  // Ruler scale: zero sits at the left margin, one centimetre per numbered step
  const ns = 'http://www.w3.org/2000/svg', ruler = document.getElementById('ruler');
  const zero = 43, cm = 41.7, right = zero + cm * 17;
  const add = (tag, attrs, text) => {
    const e = document.createElementNS(ns, tag);
    for (const k in attrs) e.setAttribute(k, attrs[k]);
    if (text) e.textContent = text;
    ruler.append(e);
  };
  add('rect', {x: 1.5, y: 8.5, width: 877, height: 12, fill: '#b0c8ea', stroke: '#d5e4f8'});
  add('rect', {x: zero, y: 8, width: right - zero, height: 13, fill: '#fff'});
  for (let q = -4; q <= 79; q++) {
    const x = Math.round(zero + q * cm / 4), n = Math.abs(q / 4);
    if (q === 0 || q === 68) continue;
    if (q % 4 === 0) add('text', {x: x, y: 18, 'font-size': 10, 'text-anchor': 'middle', fill: '#465a78'}, String(n));
    else if (q % 2 === 0) add('rect', {x: x, y: 12, width: 1, height: 5, fill: '#465a78'});
    else add('rect', {x: x, y: 14, width: 1, height: 2, fill: '#465a78'});
  }
  for (let x = zero + 52; x < right; x += 52) add('rect', {x: x, y: 22, width: 1, height: 3, fill: '#6886b3'});
  add('path', {d: 'M39.500 5.500h8v3l-4 5-4-5zM39.500 20.500v-3l4-4 4 4v3zM39.500 20.500h8v5h-8z', fill: '#e2ebf7', stroke: '#54698c'});
  add('path', {d: 'M747.500 20.500v-3l4.500-4 4.500 4v3z', fill: '#e2ebf7', stroke: '#54698c'});
</script>
</body>
</html>
